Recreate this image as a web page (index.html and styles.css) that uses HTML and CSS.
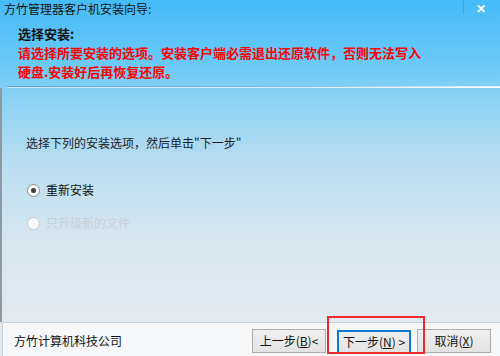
FILE: index.html
```html
<!DOCTYPE html>
<html lang="zh-CN">
<head>
    <meta charset="UTF-8">
    <title>方竹管理器客户机安装向导</title>
    <link rel="stylesheet" href="styles.css">
</head>
<body>

<div class="window">
    <div class="titlebar">
        <span class="title">方竹管理器客户机安装向导:</span>
        <span class="close-sep"></span>
        <span class="close">&#x2715;</span>
    </div>

    <div class="header">
        <div class="header-title">选择安装:</div>
        <div class="warning">请选择所要安装的选项。安装客户端必需退出还原软件，否则无法写入<br>硬盘.安装好后再恢复还原。</div>
    </div>

    <div class="divider"></div>

    <div class="content">
        <p class="hint">选择下列的安装选项，然后单击"下一步"</p>

        <div class="options">
            <label class="option">
                <span class="radio checked"></span>
                <span>重新安装</span>
            </label>
            <label class="option disabled">
                <span class="radio"></span>
                <span>只升级新的文件</span>
            </label>
        </div>
    </div>

    <div class="footer">
        <span class="company">方竹计算机科技公司</span>
        <div class="buttons">
            <button class="btn">上一步(<u>B</u>)&lt;</button>
            <div class="highlight-wrap">
                <button class="btn default">下一步(<u>N</u>) &gt;</button>
                <div class="highlight"></div>
            </div>
            <button class="btn">取消(<u>X</u>)</button>
        </div>
    </div>
</div>

</body>
</html>
```

FILE: styles.css
```css
body {
    margin: 0;
    width: 500px;
    height: 356px;
    overflow: hidden;
    font-family: "Noto Sans CJK SC", "Noto Sans", sans-serif;
}

.window {
    width: 500px;
    height: 356px;
    display: flex;
    flex-direction: column;
    background: linear-gradient(to bottom, #45bbf8 0px, #68c8f6 60px, #8dd2f4 100px, #bcdff1 170px, #d8e6ef 240px, #e3eaf0 320px);
    box-sizing: border-box;
}

.titlebar {
    height: 20px;
    display: flex;
    align-items: center;
    position: relative;
    padding-left: 4px;
}

.title {
    font-size: 12px;
    color: #111;
    line-height: 20px;
    margin-top: -2px;
}

.close-sep {
    position: absolute;
    left: 463px;
    top: 0;
    width: 1px;
    height: 14px;
    background: rgba(60, 140, 190, 0.5);
}

.close {
    position: absolute;
    left: 476px;
    top: 1px;
    font-size: 12px;
    font-weight: bold;
    color: #ffffff;
    line-height: 14px;
}

.header {
    padding: 5px 0 0 16px;
    height: 61px;
    box-sizing: border-box;
    border-left: 2px solid transparent;
}

.header-title {
    font-size: 13px;
    font-weight: bold;
    color: #111;
    line-height: 18px;
}

.warning {
    font-size: 13px;
    font-weight: bold;
    color: #ff0000;
    line-height: 19px;
}

.divider {
    margin: 5px 0 0 7px;
    height: 1px;
    background: linear-gradient(to right, #5aa6cf, #7dbfe4 60%, #e8f6ff);
    border-bottom: 1px solid rgba(255, 255, 255, 0.7);
}

.content {
    flex: 1;
    border-left: 2px solid #8d9aa4;
    padding-left: 24px;
}

.hint {
    margin: 47px 0 0 0;
    font-size: 12px;
    color: #222;
    line-height: 16px;
}

.options {
    margin-top: 31px;
    display: flex;
    flex-direction: column;
    gap: 17px;
}

.option {
    display: flex;
    align-items: center;
    gap: 6px;
    font-size: 12px;
    color: #111;
    line-height: 16px;
}

.option.disabled {
    color: #c8cfd4;
}

.radio {
    width: 13px;
    height: 13px;
    border-radius: 50%;
    border: 1px solid #8a8a8a;
    background: #ffffff;
    position: relative;
    margin-left: 1px;
    box-sizing: border-box;
}

.radio.checked::after {
    content: "";
    position: absolute;
    left: 3px;
    top: 3px;
    width: 5px;
    height: 5px;
    border-radius: 50%;
    background: #3c3c3c;
}

.option.disabled .radio {
    border-color: #c6ccd1;
    background: #f7f9fa;
}

.footer {
    height: 34px;
    margin-left: 2px;
    display: flex;
    align-items: center;
    justify-content: space-between;
    background: #f6f8fa;
    border-top: 1px solid #c9d1d8;
    border-left: 1px solid #c9d1d8;
    box-sizing: border-box;
}

.company {
    font-size: 12px;
    color: #111;
    margin-left: 11px;
    margin-top: 2px;
}

.buttons {
    display: flex;
    align-items: center;
    margin-right: 9px;
    margin-top: 2px;
}

.btn {
    width: 74px;
    height: 24px;
    padding: 0;
    font-family: inherit;
    font-size: 12px;
    color: #111;
    background: linear-gradient(to bottom, #efefef, #e3e3e3);
    border: 1px solid #adadad;
    box-sizing: border-box;
    line-height: 20px;
}

.btn u {
    text-decoration: underline;
}

.btn.default {
    border: 2px solid #0a78d7;
}

.highlight-wrap {
    position: relative;
    margin: 0 6px 0 11px;
}

.highlight {
    position: absolute;
    left: -10px;
    top: -12px;
    width: 98px;
    height: 38px;
    border: 2px solid #ee2a2e;
    box-sizing: border-box;
}
```
